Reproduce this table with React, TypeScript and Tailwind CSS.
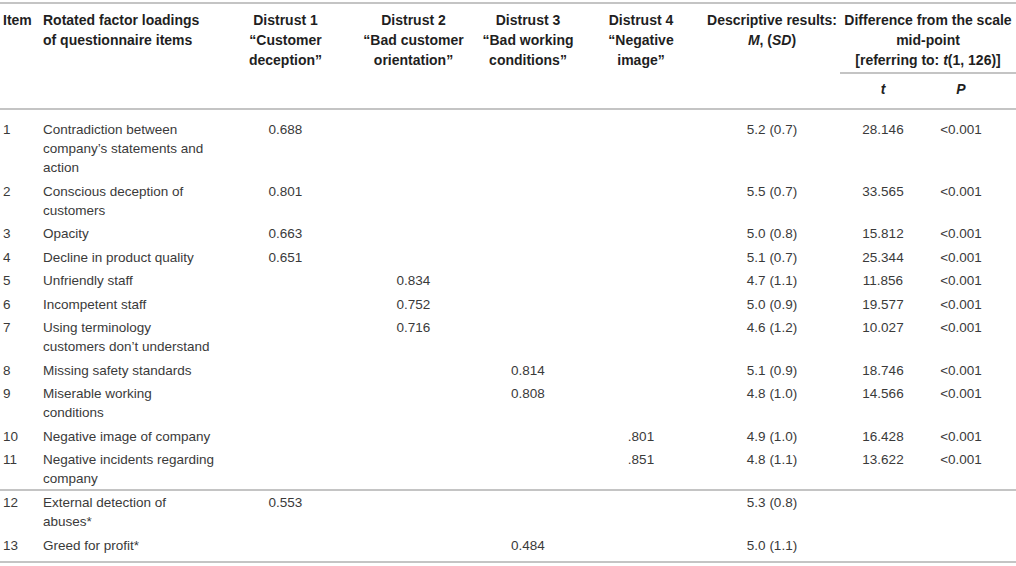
import React from 'react';

type Row = {
  item: number;
  label: string[];
  d: [string, string, string, string];
  desc: string;
  t?: string;
  p?: string;
};

const rows: Row[] = [
  { item: 1, label: ['Contradiction between', 'company’s statements and', 'action'], d: ['0.688', '', '', ''], desc: '5.2 (0.7)', t: '28.146', p: '<0.001' },
  { item: 2, label: ['Conscious deception of', 'customers'], d: ['0.801', '', '', ''], desc: '5.5 (0.7)', t: '33.565', p: '<0.001' },
  { item: 3, label: ['Opacity'], d: ['0.663', '', '', ''], desc: '5.0 (0.8)', t: '15.812', p: '<0.001' },
  { item: 4, label: ['Decline in product quality'], d: ['0.651', '', '', ''], desc: '5.1 (0.7)', t: '25.344', p: '<0.001' },
  { item: 5, label: ['Unfriendly staff'], d: ['', '0.834', '', ''], desc: '4.7 (1.1)', t: '11.856', p: '<0.001' },
  { item: 6, label: ['Incompetent staff'], d: ['', '0.752', '', ''], desc: '5.0 (0.9)', t: '19.577', p: '<0.001' },
  { item: 7, label: ['Using terminology', 'customers don’t understand'], d: ['', '0.716', '', ''], desc: '4.6 (1.2)', t: '10.027', p: '<0.001' },
  { item: 8, label: ['Missing safety standards'], d: ['', '', '0.814', ''], desc: '5.1 (0.9)', t: '18.746', p: '<0.001' },
  { item: 9, label: ['Miserable working', 'conditions'], d: ['', '', '0.808', ''], desc: '4.8 (1.0)', t: '14.566', p: '<0.001' },
  { item: 10, label: ['Negative image of company'], d: ['', '', '', '.801'], desc: '4.9 (1.0)', t: '16.428', p: '<0.001' },
  { item: 11, label: ['Negative incidents regarding', 'company'], d: ['', '', '', '.851'], desc: '4.8 (1.1)', t: '13.622', p: '<0.001' },
  { item: 12, label: ['External detection of', 'abuses*'], d: ['0.553', '', '', ''], desc: '5.3 (0.8)' },
  { item: 13, label: ['Greed for profit*'], d: ['', '', '0.484', ''], desc: '5.0 (1.1)' },
];

const distrust = [
  ['Distrust 1', '“Customer', 'deception”'],
  ['Distrust 2', '“Bad customer', 'orientation”'],
  ['Distrust 3', '“Bad working', 'conditions”'],
  ['Distrust 4', '“Negative', 'image”'],
];

function Lines({ lines }: { lines: string[] }) {
  return (
    <>
      {lines.map((l, i) => (
        <React.Fragment key={i}>
          {i > 0 && <br />}
          {l}
        </React.Fragment>
      ))}
    </>
  );
}

export default function App() {
  return (
    <div className="w-[1016px] h-[566px] bg-white pt-[2px] font-['Liberation_Sans',Arial,sans-serif] overflow-hidden">
      <table className="w-full table-fixed border-collapse">
        <colgroup>
          <col className="w-[40px]" />
          <col className="w-[182px]" />
          <col className="w-[127px]" />
          <col className="w-[129px]" />
          <col className="w-[100px]" />
          <col className="w-[126px]" />
          <col className="w-[136px]" />
          <col className="w-[86px]" />
          <col className="w-[90px]" />
        </colgroup>
        <thead className="text-[14px] leading-[20px] font-bold text-[#1f1f1f]">
          <tr className="border-t-2 border-[#c4c4c4]">
            <th rowSpan={2} className="align-top text-left pl-[3px] pt-[6px] whitespace-nowrap">Item</th>
            <th rowSpan={2} className="align-top text-left pl-[3px] pt-[6px] whitespace-nowrap">
              <Lines lines={['Rotated factor loadings', 'of questionnaire items']} />
            </th>
            {distrust.map((d, i) => (
              <th key={i} rowSpan={2} className="align-top text-center pt-[6px] whitespace-nowrap">
                <Lines lines={d} />
              </th>
            ))}
            <th rowSpan={2} className="align-top text-center pt-[6px] whitespace-nowrap">
              Descriptive results:
              <br />
              <i>M</i>, (<i>SD</i>)
            </th>
            <th colSpan={2} className="align-top text-center pt-[6px] pb-[2px] whitespace-nowrap border-b-2 border-[#c4c4c4]">
              Difference from the scale
              <br />
              mid-point
              <br />
              [referring to: <i>t</i>(1, 126)]
            </th>
          </tr>
          <tr className="border-b-2 border-[#c4c4c4]">
            <th className="text-center pt-[5px] pb-[9px] italic">t</th>
            <th className="text-center pt-[5px] pb-[9px] pr-[20px] italic">P</th>
          </tr>
        </thead>
        <tbody className="text-[13.5px] leading-[19px] text-[#3a3a3a]">
          {rows.map((r, idx) => {
            const first = idx === 0;
            const last = idx === rows.length - 1;
            const sep = r.item === 11;
            const after = r.item === 12;
            const pad = `${first ? 'pt-[10px]' : after ? 'pt-[2px]' : 'pt-[2px]'} ${last ? 'pb-[6px]' : sep ? 'pb-[1px]' : 'pb-[2.5px]'}`;
            return (
              <tr key={r.item} className={`align-top ${sep || last ? 'border-b-2 border-[#c4c4c4]' : ''}`}>
                <td className={`pl-[3px] ${pad}`}>{r.item}</td>
                <td className={`pl-[3px] whitespace-nowrap ${pad}`}>
                  <Lines lines={r.label} />
                </td>
                {r.d.map((v, i) => (
                  <td key={i} className={`text-center ${pad}`}>{v}</td>
                ))}
                <td className={`text-center ${pad}`}>{r.desc}</td>
                <td className={`text-center ${pad}`}>{r.t ?? ''}</td>
                <td className={`text-center pr-[20px] ${pad}`}>{r.p ?? ''}</td>
              </tr>
            );
          })}
        </tbody>
      </table>
    </div>
  );
}
